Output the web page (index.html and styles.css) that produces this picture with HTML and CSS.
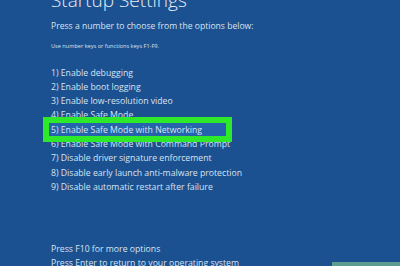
FILE: index.html
```html
<!DOCTYPE html>
<html lang="en">
<head>
    <meta charset="UTF-8">
    <meta name="viewport" content="width=device-width, initial-scale=1.0">
    <title>Startup Settings</title>
    <link rel="stylesheet" href="styles.css">
</head>
<body>
    <div class="screen">
        <h1 class="title">Startup Settings</h1>
        <p class="lead">Press a number to choose from the options below:</p>
        <p class="hint">Use number keys or functions keys F1-F9.</p>

        <ol class="options">
            <li>1) Enable debugging</li>
            <li>2) Enable boot logging</li>
            <li>3) Enable low-resolution video</li>
            <li>4) Enable Safe Mode</li>
            <li class="picked">5) Enable Safe Mode with Networking</li>
            <li>6) Enable Safe Mode with Command Prompt</li>
            <li>7) Disable driver signature enforcement</li>
            <li>8) Disable early launch anti-malware protection</li>
            <li>9) Disable automatic restart after failure</li>
        </ol>

        <div class="footer">
            <p>Press F10 for more options</p>
            <p>Press Enter to return to your operating system</p>
        </div>
    </div>
    <div class="corner"></div>
</body>
</html>
```

FILE: styles.css
```css
body {
    margin: 0;
    height: 266px;
    overflow: hidden;
    background: #1b5190;
    font-family: "Open Sans", "Noto Sans", sans-serif;
    color: #d9e3f1;
    position: relative;
}

.screen {
    padding-left: 51px;
}

.title {
    margin: -11px 0 0;
    font-size: 19px;
    font-weight: 300;
    line-height: 22px;
    color: #e6edf7;
}

.lead {
    margin: 9px 0 0;
    font-size: 8.6px;
    line-height: 12px;
}

.hint {
    margin: 10px 0 0;
    font-size: 5.6px;
    line-height: 8px;
}

.options {
    list-style: none;
    margin: 15.5px 0 0;
    padding: 0;
}

.options li {
    font-size: 8.7px;
    line-height: 14.3px;
    white-space: nowrap;
}

/* green annotation frame around option 5 */
.picked {
    position: relative;
    z-index: 0;
}

.picked::before {
    content: "";
    position: absolute;
    left: -8px;
    top: -6px;
    width: 177px;
    height: 13px;
    border: 6px solid #2ee82a;
    background: #2563ad;
    z-index: -1;
}

.footer {
    margin-top: 48px;
}

.footer p {
    margin: 0;
    font-size: 8.7px;
    line-height: 14px;
}

.corner {
    position: absolute;
    right: 0;
    bottom: 0;
    width: 68px;
    height: 4px;
    background: #5e9c92;
}
```
